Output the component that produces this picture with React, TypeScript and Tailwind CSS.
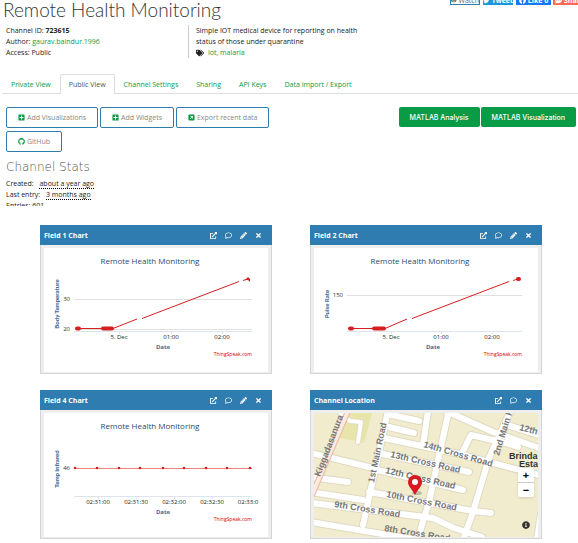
import type { ReactNode } from 'react';
import { FaCommentDots, FaExternalLinkAlt, FaEye, FaFacebook, FaGithub, FaInfoCircle, FaPencilAlt, FaPlusSquare, FaRegComment, FaTags, FaTimes, FaTwitter } from 'react-icons/fa';
import { FaSquareArrowUpRight } from 'react-icons/fa6';

type Tick = { x: number; label: string };
type YTick = { y: number; label: string; line: boolean };

interface ChartProps {
  yTitle: string;
  yTicks: YTick[];
  xTicks: Tick[];
  left: number;
  children: ReactNode;
}

const TITLE = 'Remote Health Monitoring';

const Chart = ({ yTitle, yTicks, xTicks, left, children }: ChartProps) => (
  <svg viewBox="0 0 224 124" className="block w-full bg-white font-['Open_Sans','Liberation_Sans',sans-serif]">
    <text x="106" y="16" textAnchor="middle" fontSize="8" fill="#274b6d">{TITLE}</text>
    {yTicks.map((tick) => (
      <g key={tick.label}>
        {tick.line && <path d={`M${left} ${tick.y + 0.5}H208`} stroke="#e0e0e0" />}
        <text x={left - 4} y={tick.y + 2} textAnchor="end" fontSize="6" fill="#333">{tick.label}</text>
      </g>
    ))}
    <path d={`M${left} 83.5H208`} stroke="#dde4ee" />
    {xTicks.map((tick) => (
      <g key={tick.label}>
        <path d={`M${tick.x + 0.5} 83v3`} stroke="#dde4ee" />
        <text x={tick.x} y="91" textAnchor="middle" fontSize="6" fill="#222">{tick.label}</text>
      </g>
    ))}
    <text transform="translate(15 56) rotate(-90)" textAnchor="middle" fontSize="6" fontWeight="900" fill="#3f6a97" className="font-['Lato',sans-serif]">{yTitle}</text>
    <text x="119" y="101" textAnchor="middle" fontSize="6" fontWeight="bold" fill="#3f6a97">Date</text>
    <text x="208" y="108" textAnchor="end" fontSize="5" fill="#d60000">ThingSpeak.com</text>
    {children}
  </svg>
);

const Panel = ({ title, editable = true, children }: { title: string; editable?: boolean; children: ReactNode }) => (
  <section className="border border-t-0 border-[#d5d5d5] bg-[#eee]">
    <header className="-mx-px flex h-5 items-center justify-between bg-[#2e7cb0] pr-[10px] pl-1 text-white">
      <h3 className="text-[7px] font-bold">{title}</h3>
      <div className="flex items-center gap-2 text-[7px]">
        <button aria-label="Open"><FaExternalLinkAlt /></button>
        <button aria-label="Comment"><FaRegComment /></button>
        {editable && <button aria-label="Edit"><FaPencilAlt /></button>}
        <button aria-label="Close"><FaTimes /></button>
      </div>
    </header>
    <div className="p-[3px] pb-px">{children}</div>
  </section>
);

const FieldOne = () => (
  <Chart
    yTitle="Body Temperature"
    left={30}
    yTicks={[{ y: 51, label: '30', line: true }, { y: 81, label: '20', line: true }]}
    xTicks={[{ x: 75, label: '5. Dec' }, { x: 127, label: '01:00' }, { x: 178, label: '02:00' }]}
  >
    <path d="M32 80.5H69L93 71M98 70.5L195 33.5M199 32.5L204 31" fill="none" stroke="#d62020" />
    <path d="M33 80.5H35M59 80.5H68" stroke="#d62020" strokeWidth="4" strokeLinecap="round" />
    <path d="M201 32L204 29L206 31V34L204 32Z" fill="#d62020" />
  </Chart>
);

const FieldTwo = () => (
  <Chart
    yTitle="Pulse Rate"
    left={33}
    yTicks={[{ y: 47, label: '150', line: true }]}
    xTicks={[{ x: 77, label: '5. Dec' }, { x: 127, label: '01:00' }, { x: 178, label: '02:00' }]}
  >
    <path d="M34 80.5H71L93 71M98 70.5L195 33.5M199 32.5L204 31" fill="none" stroke="#d62020" />
    <path d="M36 80.5H38M60 80.5H70M204 31H205" stroke="#d62020" strokeWidth="4" strokeLinecap="round" />
  </Chart>
);

const FieldFour = () => (
  <Chart
    yTitle="Temp Infrared"
    left={30}
    yTicks={[{ y: 55, label: '46', line: false }]}
    xTicks={[
      { x: 54, label: '02:31:00' },
      { x: 92, label: '02:31:30' },
      { x: 130, label: '02:32:00' },
      { x: 168, label: '02:32:30' },
      { x: 204, label: '02:33:0' },
    ]}
  >
    <path d="M30 55.5H208" stroke="#f08080" />
    {[31, 53, 75, 96, 119, 140, 162, 183, 206].map((x) => (
      <circle key={x} cx={x} cy="55" r="1.3" fill="#d62020" />
    ))}
  </Chart>
);

const streets = [
  'M-3 40L59 55M-3 64L34 69M-3 79L49 87',
  'M70 25L145 41L228 63M64 40L155 59M59 56L149 77M55 79L159 98L177 100',
  'M-3 90L119 105L140 115L168 124M-3 109L104 127',
  'M74 -2L49 112M135 -3L115 89L103 128M197 -3L175 45L159 99L149 127',
  'M132 -2L179 19L228 36M190 11L228 23M149 38L157 22L192 30L204 34',
  'M114 -2L109 32M75 14L100 20M78 2L105 8',
];

const sideStreets = 'M26 0L36 8L47 9L44 29M222 127L226 100';

const streetLabels = [
  { x: 6, y: 64, angle: -69, text: 'Kiggadasanura' },
  { x: 60, y: 70, angle: -78, text: '1st Main Road' },
  { x: 109, y: 34, angle: 16, text: '14th Cross Road' },
  { x: 76, y: 44, angle: 13, text: '13th Cross Road' },
  { x: 71, y: 60, angle: 13, text: '12th Cross Road' },
  { x: 72, y: 84, angle: 11, text: '10th Cross Road' },
  { x: 20, y: 94, angle: 9, text: '9th Cross Road' },
  { x: 70, y: 118, angle: 9, text: '8th Cross Road' },
  { x: 185, y: 43, angle: -73, text: '2nd Main R' },
  { x: 205, y: 17, angle: 14, text: '12th' },
];

const LocationMap = () => (
  <div className="relative">
    <svg viewBox="0 0 224 124" className="block w-full bg-[#f1ecce] font-['Liberation_Sans',sans-serif]">
      <path d="M29 0H58L50 30L22 24Z" fill="#e7e5aa" />
      <g fill="none" strokeLinecap="round" strokeLinejoin="round">
        {streets.map((d) => <path key={d} d={d} stroke="#e0dac2" strokeWidth="8" />)}
        <path d={sideStreets} stroke="#e0dac2" strokeWidth="6" />
        {streets.map((d) => <path key={d} d={d} stroke="#fff" strokeWidth="6" />)}
        <path d={sideStreets} stroke="#fff" strokeWidth="4" />
        <path d="M34 -2L-2 82" stroke="#f0b49e" strokeWidth="6" />
        <path d="M34 -2L-2 82" stroke="#fbe9df" strokeWidth="4" />
      </g>
      {streetLabels.map(({ x, y, angle, text }) => (
        <text key={text} transform={`translate(${x} ${y}) rotate(${angle})`} fontSize="9" fontWeight="bold" fill="#777">{text}</text>
      ))}
      <g fontSize="9" fontWeight="bold" fill="#333">
        <text x="195" y="46">Brinda</text>
        <text x="205" y="54">Esta</text>
      </g>
      <ellipse cx="103" cy="80" rx="5" ry="2" fill="#000" opacity="0.2" />
      <path d="M101 82C97 75 94 73 94 69A7 7 0 0 1 108 69C108 73 105 75 101 82Z" fill="#d71920" />
      <circle cx="101" cy="69" r="3" fill="#fff" />
    </svg>
    <div className="absolute right-1 bottom-10 flex flex-col divide-y divide-[#ccc] rounded-xs bg-white text-center text-[11px] leading-[14px] font-bold text-black shadow-sm">
      <button className="w-4" aria-label="Zoom in">+</button>
      <button className="w-4" aria-label="Zoom out">−</button>
    </div>
    <button aria-label="Map information" className="absolute right-2 bottom-2 text-[8px] text-[#333]"><FaInfoCircle /></button>
  </div>
);

const tabs = ['Private View', 'Public View', 'Channel Settings', 'Sharing', 'API Keys', 'Data Import / Export'];

const actions = [
  { label: 'Add Visualizations', icon: <FaPlusSquare /> },
  { label: 'Add Widgets', icon: <FaPlusSquare /> },
  { label: 'Export recent data', icon: <FaSquareArrowUpRight /> },
  { label: 'GitHub', icon: <FaGithub /> },
];

export default function App() {
  return (
    <main className="relative overflow-hidden bg-white font-['Open_Sans','Liberation_Sans',sans-serif] text-[7px] leading-[11px] text-[#222]">
      <div className="absolute top-0 right-0 flex h-[5px] items-end gap-[3px] overflow-hidden text-[7px] leading-[8px] font-bold text-white">
        <button className="flex h-[9px] w-[30px] items-center justify-center gap-[2px] border border-[#2e7cb0] bg-white font-normal text-[#666]"><FaEye />Watch</button>
        <button className="flex h-[9px] w-[30px] items-center justify-center gap-[2px] bg-[#1b95e0]"><FaTwitter />Tweet</button>
        <button className="flex h-[9px] w-[35px] items-center justify-center gap-[2px] bg-[#1877f2]"><FaFacebook />Like 0</button>
        <button className="-ml-px flex h-[9px] w-[25px] items-center gap-[2px] bg-[#ff6b4f] pl-[2px]"><FaCommentDots className="shrink-0" />Share</button>
      </div>

      <h1 className="pl-[3px] font-['Lato',sans-serif] text-[19px] leading-[19px] font-light text-[#333]">{TITLE}</h1>
      <div className="grid grid-cols-[182px_1fr] pt-[6px] pl-[6px]">
        <div>
          <p>Channel ID: <b>723615</b></p>
          <p>Author: <a href="#author" className="text-[#0a9b46]">gaurav.baindur.1996</a></p>
          <p>Access: Public</p>
        </div>
        <div className="w-44 border-l border-[#ccc] pl-[7px]">
          <p>Simple IOT medical device for reporting on health status of those under quarantine</p>
          <p className="flex items-center gap-1"><FaTags className="text-[8px]" /><a href="#tags" className="text-[#0a9b46]">iot, malaria</a></p>
        </div>
      </div>

      <nav className="mt-4 ml-[2px] flex h-5 border-b border-[#ddd] text-[#0a9b46]">
        {tabs.map((tab) => (
          <a key={tab} href="#tab" className={tab === 'Public View' ? '-mb-px rounded-t-xs border border-b-0 border-[#ddd] bg-white px-2 pt-1 text-[#555]' : 'px-[9px] pt-[5px]'}>{tab}</a>
        ))}
      </nav>

      <div className="flex items-start justify-between pt-[13px] pr-[2px] pl-[6px]">
        <div className="flex w-72 flex-wrap gap-x-[2px] gap-y-[3px]">
          {actions.map(({ label, icon }) => (
            <button key={label} className="flex h-[21px] items-center gap-[2px] rounded-xs border border-[#2e7cb0] px-[11px] text-[#888]">
              <span className="text-[#0a9b46]">{icon}</span>{label}
            </button>
          ))}
        </div>
        <div className="flex gap-px font-['Inter',sans-serif] font-medium text-white">
          <button className="h-5 rounded-xs bg-[#0a9b46] px-[11px]">MATLAB Analysis</button>
          <button className="h-5 rounded-xs bg-[#0a9b46] px-[11px]">MATLAB Visualization</button>
        </div>
      </div>

      <div className="h-[54px] overflow-hidden pt-2 pl-[6px]">
        <h2 className="font-['DejaVu_Sans',sans-serif] text-[12px] leading-[14px] font-extralight text-[#555]">Channel Stats</h2>
        <p className="pt-1">Created: <span className="ml-1 border-b border-dotted border-black">about a year ago</span></p>
        <p>Last entry: <span className="ml-1 border-b border-dotted border-black">3 months ago</span></p>
        <p>Entries: 601</p>
      </div>

      <div className="grid grid-cols-2 gap-x-[38px] gap-y-4 pt-[19px] pr-9 pb-1 pl-10">
        <Panel title="Field 1 Chart"><FieldOne /></Panel>
        <Panel title="Field 2 Chart"><FieldTwo /></Panel>
        <Panel title="Field 4 Chart"><FieldFour /></Panel>
        <Panel title="Channel Location" editable={false}><LocationMap /></Panel>
      </div>
    </main>
  );
}
